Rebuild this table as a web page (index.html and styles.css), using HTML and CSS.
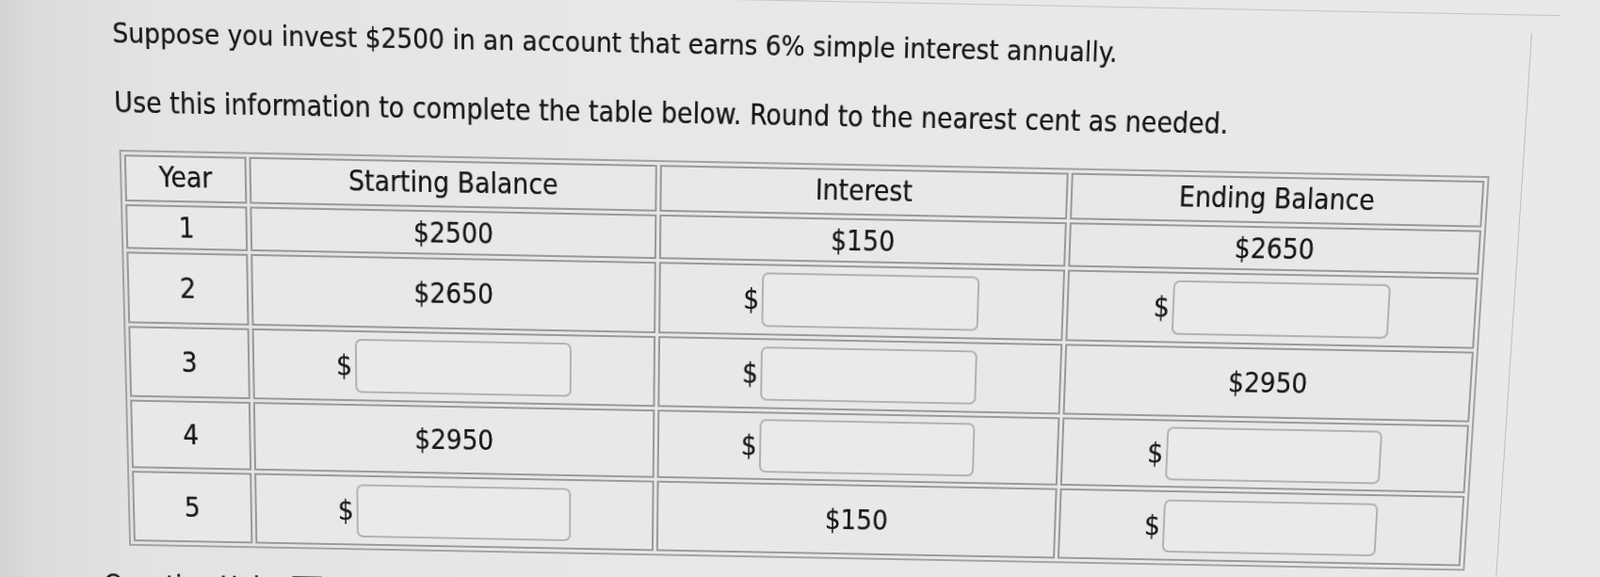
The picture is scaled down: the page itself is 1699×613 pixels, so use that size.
FILE: index.html
```html
<!DOCTYPE html>
<html lang="en">
<head>
<meta charset="utf-8">
<title>Simple interest table</title>
<link rel="stylesheet" href="styles.css">
</head>
<body>
<div class="screen">
  <div class="topline"></div>
  <div class="panel">
    <p class="q q1">Suppose you invest $2500 in an account that earns 6% simple interest annually.</p>
    <p class="q q2">Use this information to complete the table below. Round to the nearest cent as needed.</p>
    <table class="grid">
      <colgroup>
        <col class="c-year">
        <col class="c-start">
        <col class="c-int">
        <col class="c-end">
      </colgroup>
      <tr class="r-head">
        <th>Year</th>
        <th>Starting Balance</th>
        <th>Interest</th>
        <th>Ending Balance</th>
      </tr>
      <tr class="r-one">
        <td>1</td>
        <td>$2500</td>
        <td>$150</td>
        <td>$2650</td>
      </tr>
      <tr class="r-tall">
        <td>2</td>
        <td>$2650</td>
        <td><span class="money"><span class="dollar">$</span><input class="box" type="text"></span></td>
        <td><span class="money"><span class="dollar">$</span><input class="box" type="text"></span></td>
      </tr>
      <tr class="r-tall">
        <td>3</td>
        <td><span class="money"><span class="dollar">$</span><input class="box" type="text"></span></td>
        <td><span class="money"><span class="dollar">$</span><input class="box" type="text"></span></td>
        <td>$2950</td>
      </tr>
      <tr class="r-tall r-four">
        <td>4</td>
        <td>$2950</td>
        <td><span class="money"><span class="dollar">$</span><input class="box" type="text"></span></td>
        <td><span class="money"><span class="dollar">$</span><input class="box" type="text"></span></td>
      </tr>
      <tr class="r-tall r-five">
        <td>5</td>
        <td><span class="money"><span class="dollar">$</span><input class="box" type="text"></span></td>
        <td>$150</td>
        <td><span class="money"><span class="dollar">$</span><input class="box" type="text"></span></td>
      </tr>
    </table>
    <div class="help">Question Help: <span class="help-icon"></span></div>
  </div>
</div>
</body>
</html>
```

FILE: styles.css
```css
html, body {
  margin: 0;
  padding: 0;
}

body {
  width: 1699px;
  height: 613px;
  overflow: hidden;
  background: linear-gradient(90deg, #d2d3d3 0px, #dbdcdc 40px, #e2e3e3 160px, #e7e7e7 600px, #e9e9e9 1699px);
  font-family: "DejaVu Sans", "Open Sans", sans-serif;
  font-stretch: condensed;
  color: #161616;
  text-shadow: 0 0 0.6px rgba(20, 20, 20, 0.7);
}

.screen {
  height: 613px;
  padding-top: 6px;
  box-sizing: border-box;
  transform-origin: 855px 370px;
  transform: perspective(2000px) rotateX(-7deg) rotateZ(1.1deg);
}

.topline {
  width: 1633px;
  border-top: 1px solid #c4c4c4;
}

.panel {
  width: 1605px;
  margin-top: 18px;
  height: 640px;
  border-right: 1px solid #bdbdbd;
  box-sizing: border-box;
  padding-top: 9px;
  padding-left: 128px;
}

.q {
  margin: 0;
  font-size: 29.5px;
  line-height: 38px;
  white-space: nowrap;
}

.q1 {
  font-size: 28.9px;
}

.q2 {
  margin-top: 34px;
}

.grid {
  margin-top: 30px;
  margin-left: 4px;
  width: 1438px;
  table-layout: fixed;
  border-collapse: separate;
  border-spacing: 3px;
  border: 2px solid #a2a2a2;
  font-size: 29.5px;
}

.c-year { width: 128px; }
.c-start { width: 428px; }
.c-int { width: 429px; }
.c-end { width: 434px; }

.grid th,
.grid td {
  border: 2px solid #999999;
  padding: 0;
  text-align: center;
  vertical-align: middle;
  font-weight: normal;
  background: #e8e8e8;
  box-sizing: border-box;
}

.r-head th { height: 49px; padding-bottom: 4px; }
.r-one td { height: 47px; }
.r-tall td { height: 76px; }
.r-four td { height: 74px; }
.r-five td { height: 77px; }

.money {
  display: inline-flex;
  align-items: center;
  gap: 3px;
  vertical-align: middle;
}

.dollar {
  font-size: 29.5px;
}

.box {
  width: 230px;
  height: 58px;
  box-sizing: border-box;
  border: 2px solid #b1b1b1;
  border-radius: 7px;
  background: #eaeaea;
  margin: 0;
  padding: 0;
  font: inherit;
}

.help {
  margin-top: 25px;
  margin-left: -24px;
  font-size: 29px;
  line-height: 34px;
  display: flex;
  align-items: center;
  gap: 10px;
}

.help-icon {
  display: inline-block;
  width: 32px;
  height: 24px;
  border: 2px solid #555;
  box-sizing: border-box;
}
```
